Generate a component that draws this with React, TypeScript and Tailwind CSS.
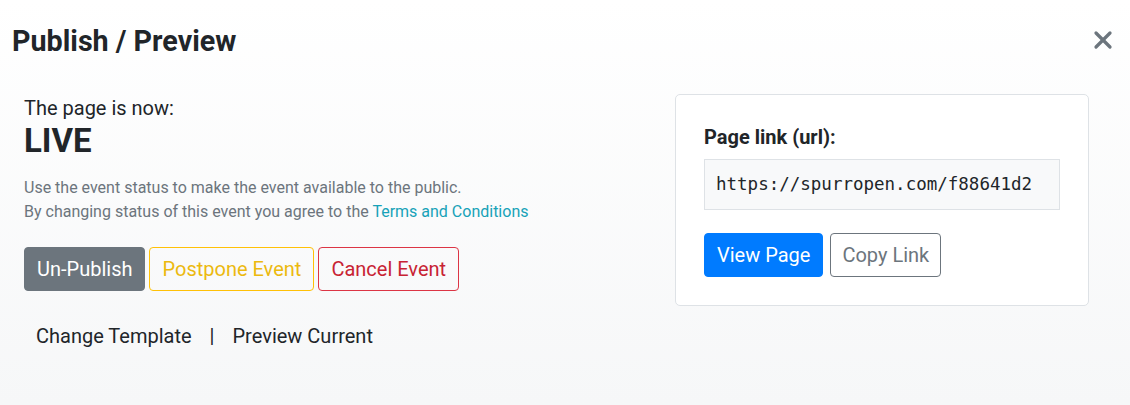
import { X } from 'lucide-react';

const font = { fontFamily: 'Roboto, "Liberation Sans", sans-serif' };

const App = () => {
  return (
    <div
      className="w-[1130px] h-[405px] bg-gradient-to-b from-white to-[#f6f7f8] text-[#212529]"
      style={font}
    >
      <div className="flex items-start justify-between pl-3 pr-[13px] pt-[24px]">
        <h4 className="text-[28.7px] font-bold leading-[34px]">Publish / Preview</h4>
        <button className="mt-[2px] text-[#6c757d]">
          <X size={28} strokeWidth={2.8} />
        </button>
      </div>

      <div className="flex items-start pl-6 pr-[41px] pt-[38px]">
        <div className="flex-1">
          <div className="text-[20px] leading-[24px]">The page is now:</div>
          <div className="mt-[2px] text-[33px] font-bold leading-[38px]">LIVE</div>
          <div className="mt-[16px] text-[16px] leading-[24px] text-[#6c757d]">
            <div>Use the event status to make the event available to the public.</div>
            <div>
              By changing status of this event you agree to the{' '}
              <a className="text-[#17a2b8]">Terms and Conditions</a>
            </div>
          </div>

          <div className="mt-[23px] flex gap-1">
            <button className="h-[44px] px-[12px] rounded-[4px] bg-[#6c757d] border border-[#6c757d] text-white text-[20px]">
              Un-Publish
            </button>
            <button className="h-[44px] px-[12px] rounded-[4px] border border-[#ffc107] text-[#ecb90f] text-[20px]">
              Postpone Event
            </button>
            <button className="h-[44px] px-[12px] rounded-[4px] border border-[#dc3545] text-[#c82333] text-[20px]">
              Cancel Event
            </button>
          </div>

          <div className="mt-[30px] flex items-center pl-3 text-[20px]">
            <a>Change Template</a>
            <span className="mx-[18px] text-[20px] leading-none">|</span>
            <a>Preview Current</a>
          </div>
        </div>

        <div className="w-[414px] h-[212px] mt-[-2px] rounded-[5px] border border-[#dee2e6] bg-white px-[28px] pt-[30px]">
          <div className="text-[20px] font-bold leading-[24px]">Page link (url):</div>
          <div className="mt-[10px] w-[356px] h-[51px] flex items-center px-[11px] bg-[#f8f9fa] border border-[#dee2e6] text-[17.5px] font-['DejaVu_Sans_Mono',monospace]">
            https://spurropen.com/f88641d2
          </div>
          <div className="mt-[23px] flex gap-[7px]">
            <button className="h-[44px] px-[12px] rounded-[4px] bg-[#007bff] border border-[#007bff] text-white text-[20px]">
              View Page
            </button>
            <button className="h-[44px] px-[11px] rounded-[4px] border border-[#6c757d] text-[#6c757d] text-[20px]">
              Copy Link
            </button>
          </div>
        </div>
      </div>
    </div>
  );
};

export default App;
